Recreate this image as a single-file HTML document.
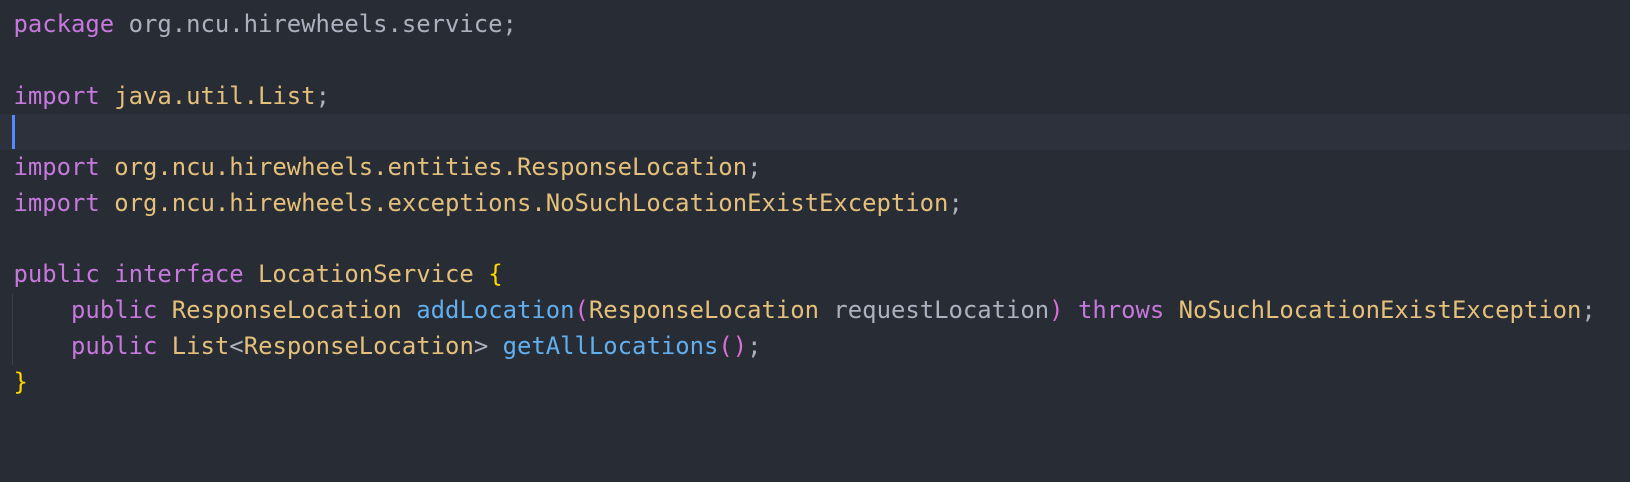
<!DOCTYPE html>
<html><head><style>
body{margin:0;width:1630px;height:482px;background:#282c34;overflow:hidden}
.c{position:absolute;left:13.5px;top:7px;font-family:"DejaVu Sans Mono","Liberation Mono",monospace;font-size:23.9px;line-height:35.76px;color:#abb2bf;white-space:pre}
.k{color:#c678dd}.y{color:#e5c07b}.b{color:#61afef}.g{color:#ffd700}.p{color:#da70d6}
.hl{position:absolute;left:0;top:114px;width:1630px;height:36px;background:#2c313c}
.cur{position:absolute;left:12px;top:115px;width:3px;height:34px;background:#528bff}
.ig{position:absolute;left:12px;top:294px;width:1px;height:71px;background:#3b4048}
</style></head><body>
<div class="hl"></div><div class="cur"></div><div class="ig"></div>
<div class="c"><span class="k">package</span> org.ncu.hirewheels.service;

<span class="k">import</span> <span class="y">java.util.List</span>;

<span class="k">import</span> <span class="y">org.ncu.hirewheels.entities.ResponseLocation</span>;
<span class="k">import</span> <span class="y">org.ncu.hirewheels.exceptions.NoSuchLocationExistException</span>;

<span class="k">public</span> <span class="k">interface</span> <span class="y">LocationService</span> <span class="g">{</span>
    <span class="k">public</span> <span class="y">ResponseLocation</span> <span class="b">addLocation</span><span class="p">(</span><span class="y">ResponseLocation</span> requestLocation<span class="p">)</span> <span class="k">throws</span> <span class="y">NoSuchLocationExistException</span>;
    <span class="k">public</span> <span class="y">List</span>&lt;<span class="y">ResponseLocation</span>&gt; <span class="b">getAllLocations</span><span class="p">()</span>;
<span class="g">}</span></div>
</body></html>
